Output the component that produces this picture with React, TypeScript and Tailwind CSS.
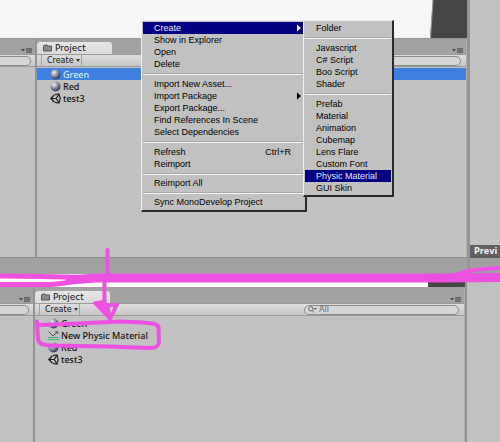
import React, { useState } from 'react';

type AssetKind = 'material' | 'physic' | 'scene';

interface Asset {
  name: string;
  kind: AssetKind;
}

interface MenuEntry {
  label: string;
  shortcut?: string;
  submenu?: boolean;
}

// each inner array is one group, groups get a separator between them
const mainMenu: MenuEntry[][] = [
  [{ label: 'Create', submenu: true }, { label: 'Show in Explorer' }, { label: 'Open' }, { label: 'Delete' }],
  [
    { label: 'Import New Asset...' },
    { label: 'Import Package', submenu: true },
    { label: 'Export Package...' },
    { label: 'Find References In Scene' },
    { label: 'Select Dependencies' },
  ],
  [{ label: 'Refresh', shortcut: 'Ctrl+R' }, { label: 'Reimport' }],
  [{ label: 'Reimport All' }],
  [{ label: 'Sync MonoDevelop Project' }],
];

const createMenu: MenuEntry[][] = [
  [{ label: 'Folder' }],
  [{ label: 'Javascript' }, { label: 'C# Script' }, { label: 'Boo Script' }, { label: 'Shader' }],
  [
    { label: 'Prefab' },
    { label: 'Material' },
    { label: 'Animation' },
    { label: 'Cubemap' },
    { label: 'Lens Flare' },
    { label: 'Custom Font' },
    { label: 'Physic Material' },
    { label: 'GUI Skin' },
  ],
];

const assetsBefore: Asset[] = [
  { name: 'Green', kind: 'material' },
  { name: 'Red', kind: 'material' },
  { name: 'test3', kind: 'scene' },
];

const assetsAfter: Asset[] = [
  { name: 'Green', kind: 'material' },
  { name: 'New Physic Material', kind: 'physic' },
  { name: 'Red', kind: 'material' },
  { name: 'test3', kind: 'scene' },
];

const AssetIcon: React.FC<{ kind: AssetKind }> = ({ kind }) => {
  if (kind === 'physic') {
    return (
      <svg className="w-[11px] h-[11px] shrink-0" viewBox="0 0 11 11" fill="none">
        <path d="M0.5 1.5L5 6L9.5 2M7 1.8H9.7V4" stroke="#46564e" strokeWidth="1" />
        <path d="M0 7.5H11" stroke="#4fa27c" strokeWidth="1" />
        <path d="M0 9H11V10H0Z" fill="#35c777" />
      </svg>
    );
  }
  if (kind === 'scene') {
    // the unity cube
    return (
      <svg className="w-[11px] h-[11px] shrink-0" viewBox="0 0 11 11" fill="none" stroke="#1c1c1c">
        <path d="M5 1.6L9 0.8L10.2 5.5L9 10.2L5 9.4" strokeWidth="1.1" />
        <path d="M4.4 1.8L0.8 5.5L4.4 9.2" strokeWidth="1.3" />
        <path d="M1 5.5H6.2M6.2 5.5L8.8 1.4M6.2 5.5L8.8 9.6" strokeWidth="1.1" />
      </svg>
    );
  }
  return (
    <svg className="w-[11px] h-[11px] shrink-0" viewBox="0 0 11 11">
      <defs>
        <radialGradient id="ball" cx="0.35" cy="0.3" r="0.75">
          <stop offset="0" stopColor="#f2f4f6" />
          <stop offset="0.4" stopColor="#9aa3ae" />
          <stop offset="0.75" stopColor="#525c78" />
          <stop offset="1" stopColor="#2c3348" />
        </radialGradient>
      </defs>
      <circle cx="5.5" cy="5.5" r="5" fill="url(#ball)" />
    </svg>
  );
};

// little arrow + lines in the corner of every panel
const PanelOptions: React.FC = () => (
  <button aria-label="Panel options" className="ml-auto mr-[3px] mb-px self-end">
    <svg className="w-[11px] h-[6px]" viewBox="0 0 11 6">
      <path d="M0 2H4L2 4.5Z" fill="#444" />
      <rect x="5" y="1" width="6" height="5" fill="#7c7c7c" />
      <path d="M5 1.5H11M5 3.5H11M5 5.5H11" stroke="#666" strokeWidth="1" />
    </svg>
  </button>
);

const SidePanel: React.FC = () => (
  <div className="flex flex-col bg-[#c2c2c2] border-r-2 border-[#949494]">
    <div className="flex h-[15px] bg-[#a2a2a2]">
      <PanelOptions />
    </div>
    <div className="flex items-center h-[13px] pr-[4px] bg-linear-to-b from-[#dedede] to-[#c6c6c6] border-t border-b border-[#9a9a9a]">
      <input
        aria-label="Search hierarchy"
        className="w-full h-[10px] rounded-r-full border border-l-0 border-[#8a8a8a] bg-[#d6d6d6] outline-none"
      />
    </div>
  </div>
);

interface ProjectPanelProps {
  assets: Asset[];
  initial: string | null;
  placeholder: string;
}

const ProjectPanel: React.FC<ProjectPanelProps> = ({ assets, initial, placeholder }) => {
  const [selected, setSelected] = useState<string | null>(initial);

  return (
    <div className="flex-1 min-w-0 flex flex-col bg-[#c2c2c2] border-r border-[#b0b0b0]">
      <div className="flex h-[15px] bg-[#a2a2a2]">
        <button className="flex items-center gap-[3px] w-[75px] h-[12px] pl-[6px] self-end rounded-t-[3px] bg-linear-to-b from-[#e6e6e6] to-[#dadada] text-[9px] leading-none text-[#111]">
          <svg className="w-[9px] h-[8px]" viewBox="0 0 9 8">
            <path d="M0.5 7V2L1.5 1H4L5 2H8.5V7Z" fill="#8a8a8a" stroke="#555" strokeWidth="1" />
          </svg>
          Project
        </button>
        <PanelOptions />
      </div>
      <div className="flex items-center h-[13px] pl-[4px] pr-[5px] bg-linear-to-b from-[#dedede] to-[#c6c6c6] border-t border-b border-[#9a9a9a]">
        <button className="flex items-center gap-[2px] w-[41px] h-full pl-[5px] border-l border-r border-[#a4a4a4] text-[8px] leading-none text-[#111]">
          Create
          <svg className="w-[4px] h-[6px] shrink-0" viewBox="0 0 4 6">
            <path d="M0 1H4L2 4Z" fill="#333" />
          </svg>
        </button>
        <label className="flex items-center gap-[2px] ml-auto w-[155px] h-[10px] pl-[3px] rounded-full border border-[#8a8a8a] bg-[#d6d6d6]">
          <svg className="w-[9px] h-[7px] shrink-0" viewBox="0 0 9 7" fill="none" stroke="#666">
            <circle cx="2.8" cy="2.8" r="2.2" />
            <path d="M4.4 4.4L6 6.5" />
            <path d="M5.5 2H9L7.2 4Z" fill="#666" stroke="none" />
          </svg>
          <input
            aria-label="Search assets"
            placeholder={placeholder}
            className="w-full min-w-0 bg-transparent outline-none text-[8px] leading-none placeholder-[#666]"
          />
        </label>
      </div>
      <ul className="pt-px">
        {assets.map((asset) => (
          <li key={asset.name}>
            <button
              onClick={() => setSelected(asset.name)}
              className={`flex items-center gap-[2px] w-full h-[12px] pl-[13px] font-['Noto_Sans',sans-serif] font-medium text-[9px] leading-none whitespace-nowrap ${
                selected === asset.name ? 'bg-[#3d80df] text-[#d4ebff]' : 'text-[#111]'
              }`}
            >
              <AssetIcon kind={asset.kind} />
              {asset.name}
            </button>
          </li>
        ))}
      </ul>
    </div>
  );
};

interface MenuProps {
  groups: MenuEntry[][];
  active: string;
  className: string;
}

const Menu: React.FC<MenuProps> = ({ groups, active, className }) => (
  <div
    role="menu"
    className={`absolute pt-px pl-px pr-px bg-[#c1c1c1] border-t border-l border-t-[#f0f0f0] border-l-[#f0f0f0] border-r-2 border-b-2 border-r-[#2a2a2a] border-b-[#2a2a2a] font-['Liberation_Sans',sans-serif] text-[9px] leading-none text-black ${className}`}
  >
    {groups.map((group, i) => (
      <div key={i}>
        {i > 0 && <hr className={`mt-[3px] ${i > 2 ? 'mb-[2px]' : 'mb-[3px]'} h-[2px] border-t border-b border-t-[#a6a6a6] border-b-[#f4f4f4]`} />}
        {group.map((entry) => (
          <button
            key={entry.label}
            role="menuitem"
            className={`flex items-center w-full h-[12px] pl-[11px] whitespace-nowrap ${
              entry.label === active ? 'bg-[#000080] text-[#e8e8ff]' : ''
            }`}
          >
            {entry.label}
            {entry.shortcut && <span className="ml-auto pr-[13px]">{entry.shortcut}</span>}
            {entry.submenu && (
              <svg className="ml-auto mr-[3px] w-[4px] h-[8px]" viewBox="0 0 4 8">
                <path d="M0 0.5V7.5L4 4Z" fill="currentColor" />
              </svg>
            )}
          </button>
        ))}
      </div>
    ))}
  </div>
);

// pink pen marks drawn over both editors
const PenMarks: React.FC = () => (
  <svg
    className="absolute left-0 top-[240px] w-[500px] h-[120px] pointer-events-none"
    viewBox="0 240 500 120"
    fill="none"
    stroke="#ee50e2"
    strokeLinecap="round"
    strokeLinejoin="round"
  >
    <path d="M-4 276L40 276.5L88 277.5" strokeWidth="5" />
    <path d="M-4 284.5H50C66 284.5 76 279 96 278.5" strokeWidth="5" />
    <path d="M70 280L96 278H440L504 277.5" strokeWidth="9" />
    <path d="M432 280C450 280 454 273 474 270L504 267.5" strokeWidth="4" />
    <path d="M107.5 250V279" strokeWidth="4" />
    <path d="M104.500 279V310" strokeWidth="4" />
    <path d="M94.5 303L104 301.5L108 306L110 319Z" fill="#ee50e2" strokeWidth="3" />
    <path d="M105 306L117 304.5L110 319" strokeWidth="4" />
    <path d="M37 321.5L38 339C39 345 44 345 52 345.500L108 346.500L150 348C157 348 159 346 159 341L158.500 327C157 323 150 323 143 322.500L120 321.500L78 323.500L40 325" strokeWidth="4" />
  </svg>
);

export default function App() {
  return (
    <div className="relative min-h-screen flex flex-col overflow-hidden bg-[#a2a2a2] font-['DejaVu_Sans',Verdana,sans-serif]">
      {/* editor before the asset is created */}
      <section className="flex h-[274px]">
        <div className="flex-1 min-w-0 flex flex-col">
          <div className="flex justify-end h-[38px] shrink-0 bg-[#f6f6f6]">
            <svg className="w-[37px] h-full" viewBox="0 0 37 38" preserveAspectRatio="none">
              <path d="M3 0H37V38H0Z" fill="#454545" />
              <path d="M3 0L0.5 38" stroke="#999" />
            </svg>
          </div>
          <div className="flex-1 flex border-t border-b border-t-[#979797] border-b-[#8c8c8c]">
            <div className="grid w-[37px]">
              <SidePanel />
            </div>
            <ProjectPanel assets={assetsBefore} initial="Green" placeholder="" />
          </div>
          <div className="h-[16px] shrink-0 bg-[#a1a1a1]" />
        </div>
        <div className="flex flex-col w-[33px] border-l-[3px] border-[#949494] bg-[#c2c2c2]">
          <div className="mt-auto h-[13px] pl-[4px] bg-[#606060] text-[8px] leading-[13px] font-bold text-[#eee] whitespace-nowrap">
            Previ
          </div>
          <div className="h-[16px] bg-[#a1a1a1]" />
        </div>
      </section>

      {/* editor after */}
      <section className="flex-1 flex">
        <div className="flex-1 min-w-0 flex flex-col">
          <div className="flex justify-end h-[13px] bg-white">
            <div className="w-[37px] bg-[#454545]" />
          </div>
          <div className="flex-1 flex pt-px">
            <div className="grid w-[35px]">
              <SidePanel />
            </div>
            <ProjectPanel assets={assetsAfter} initial={null} placeholder="All" />
          </div>
        </div>
        <div className="w-[35px] mt-[6px] border-l-2 border-[#949494] bg-[#c2c2c2]" />
      </section>

      <Menu groups={mainMenu} active="Create" className="left-[141px] top-[20px] w-[166px] pb-[2px]" />
      <Menu groups={createMenu} active="Physic Material" className="left-[303px] top-[20px] w-[91px] pb-px" />
      <PenMarks />
    </div>
  );
}
